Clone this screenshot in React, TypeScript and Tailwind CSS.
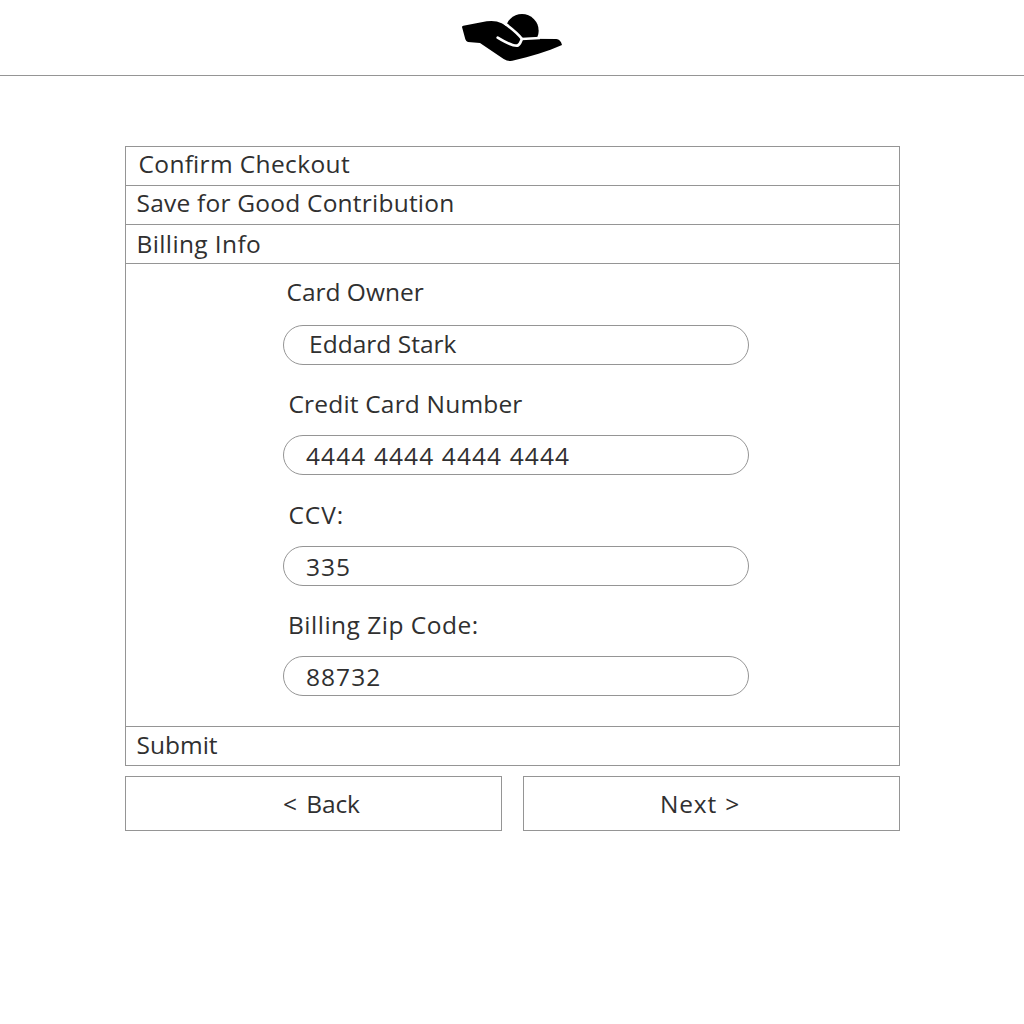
const fields = [
  { label: 'Card Owner', value: 'Eddard Stark', block: 'pt-[12px]', labelStyle: 'pl-[3.5px] tracking-[-0.01px]', gap: 'mt-[17px]', valueStyle: 'pl-[25px] pt-[2px] tracking-[0.02px]' },
  { label: 'Credit Card Number', value: '4444 4444 4444 4444', block: 'pt-[23px]', labelStyle: 'pl-[5.5px] tracking-[0.18px]', gap: 'mt-[15px]', valueStyle: 'pl-[22px] pt-[4px] tracking-[1.1px]' },
  { label: 'CCV:', value: '335', block: 'pt-[24px]', labelStyle: 'pl-[5.5px] tracking-[0.9px]', gap: 'mt-[15px]', valueStyle: 'pl-[22px] pt-[4px] tracking-[1px]' },
  { label: 'Billing Zip Code:', value: '88732', block: 'pt-[23px]', labelStyle: 'pl-[5px] tracking-[0.5px]', gap: 'mt-[15px]', valueStyle: 'pl-[22px] pt-[4px] tracking-[1.05px]' },
];

function Logo() {
  return (
    <svg viewBox="0 0 360 210" className="mt-1 h-[70px] w-[120px]" aria-label="Open hand holding a coin">
      <circle cx="210" cy="80" r="50" />
      <path d="M34 65 L104 52 Q130 48 149 58 C170 70 193 87 209 104 L313 105 Q326 106 330 123 C285 143 235 157 187 169 Q170 174 155 165 L84 117 L48 114 Q42 113 40 106 L30 69 Q30 66 34 65 Z" />
      <path d="M158 58 C178 73 196 86 210 105 L264 102" fill="none" stroke="#fff" strokeWidth="8" />
      <path d="M137 101 C160 115 184 126 196 125 C205 123 206 111 210 105" fill="none" stroke="#fff" strokeWidth="8" strokeLinecap="round" />
    </svg>
  );
}

export default function App() {
  return (
    <div className="min-h-screen bg-white font-['Open_Sans',sans-serif] text-[24.5px] leading-[32px] text-[#303030]">
      <header className="flex h-[76px] justify-center border-b border-[#959595]">
        <Logo />
      </header>
      <main className="ml-[125px] mt-[70px] w-[775px]">
        <section className="border border-[#959595]">
          <h2 className="h-[39px] border-b border-[#959595] pl-[12.5px] pt-[1px] tracking-[0.37px] [font-feature-settings:'liga'_1]">Confirm Checkout</h2>
          <h2 className="h-[39px] border-b border-[#959595] pl-[10.5px] pt-[1px] tracking-[0.22px]">Save for Good Contribution</h2>
          <h2 className="h-[39px] border-b border-[#959595] pl-[10.5px] pt-[3px] tracking-[0.38px]">Billing Info</h2>
          <div className="h-[463px] border-b border-[#959595] pl-[157px]">
            {fields.map((f) => (
              <div key={f.label} className={`w-[466px] ${f.block}`}>
                <div className={f.labelStyle}>{f.label}</div>
                <div className={`h-[40px] rounded-full border border-[#959595] ${f.gap} ${f.valueStyle}`}>{f.value}</div>
              </div>
            ))}
          </div>
          <h2 className="h-[38px] pl-[10.5px] pt-[2px]">Submit</h2>
        </section>
        <div className="mt-[10px] flex justify-between">
          <button className="flex h-[55px] w-[377px] border border-[#959595] pl-[157px] pt-[11px] tracking-[-0.1px] [word-spacing:3px]">&lt; Back</button>
          <button className="flex h-[55px] w-[377px] border border-[#959595] pl-[136px] pt-[11px] tracking-[0.8px] [word-spacing:1px]">Next &gt;</button>
        </div>
      </main>
    </div>
  );
}
